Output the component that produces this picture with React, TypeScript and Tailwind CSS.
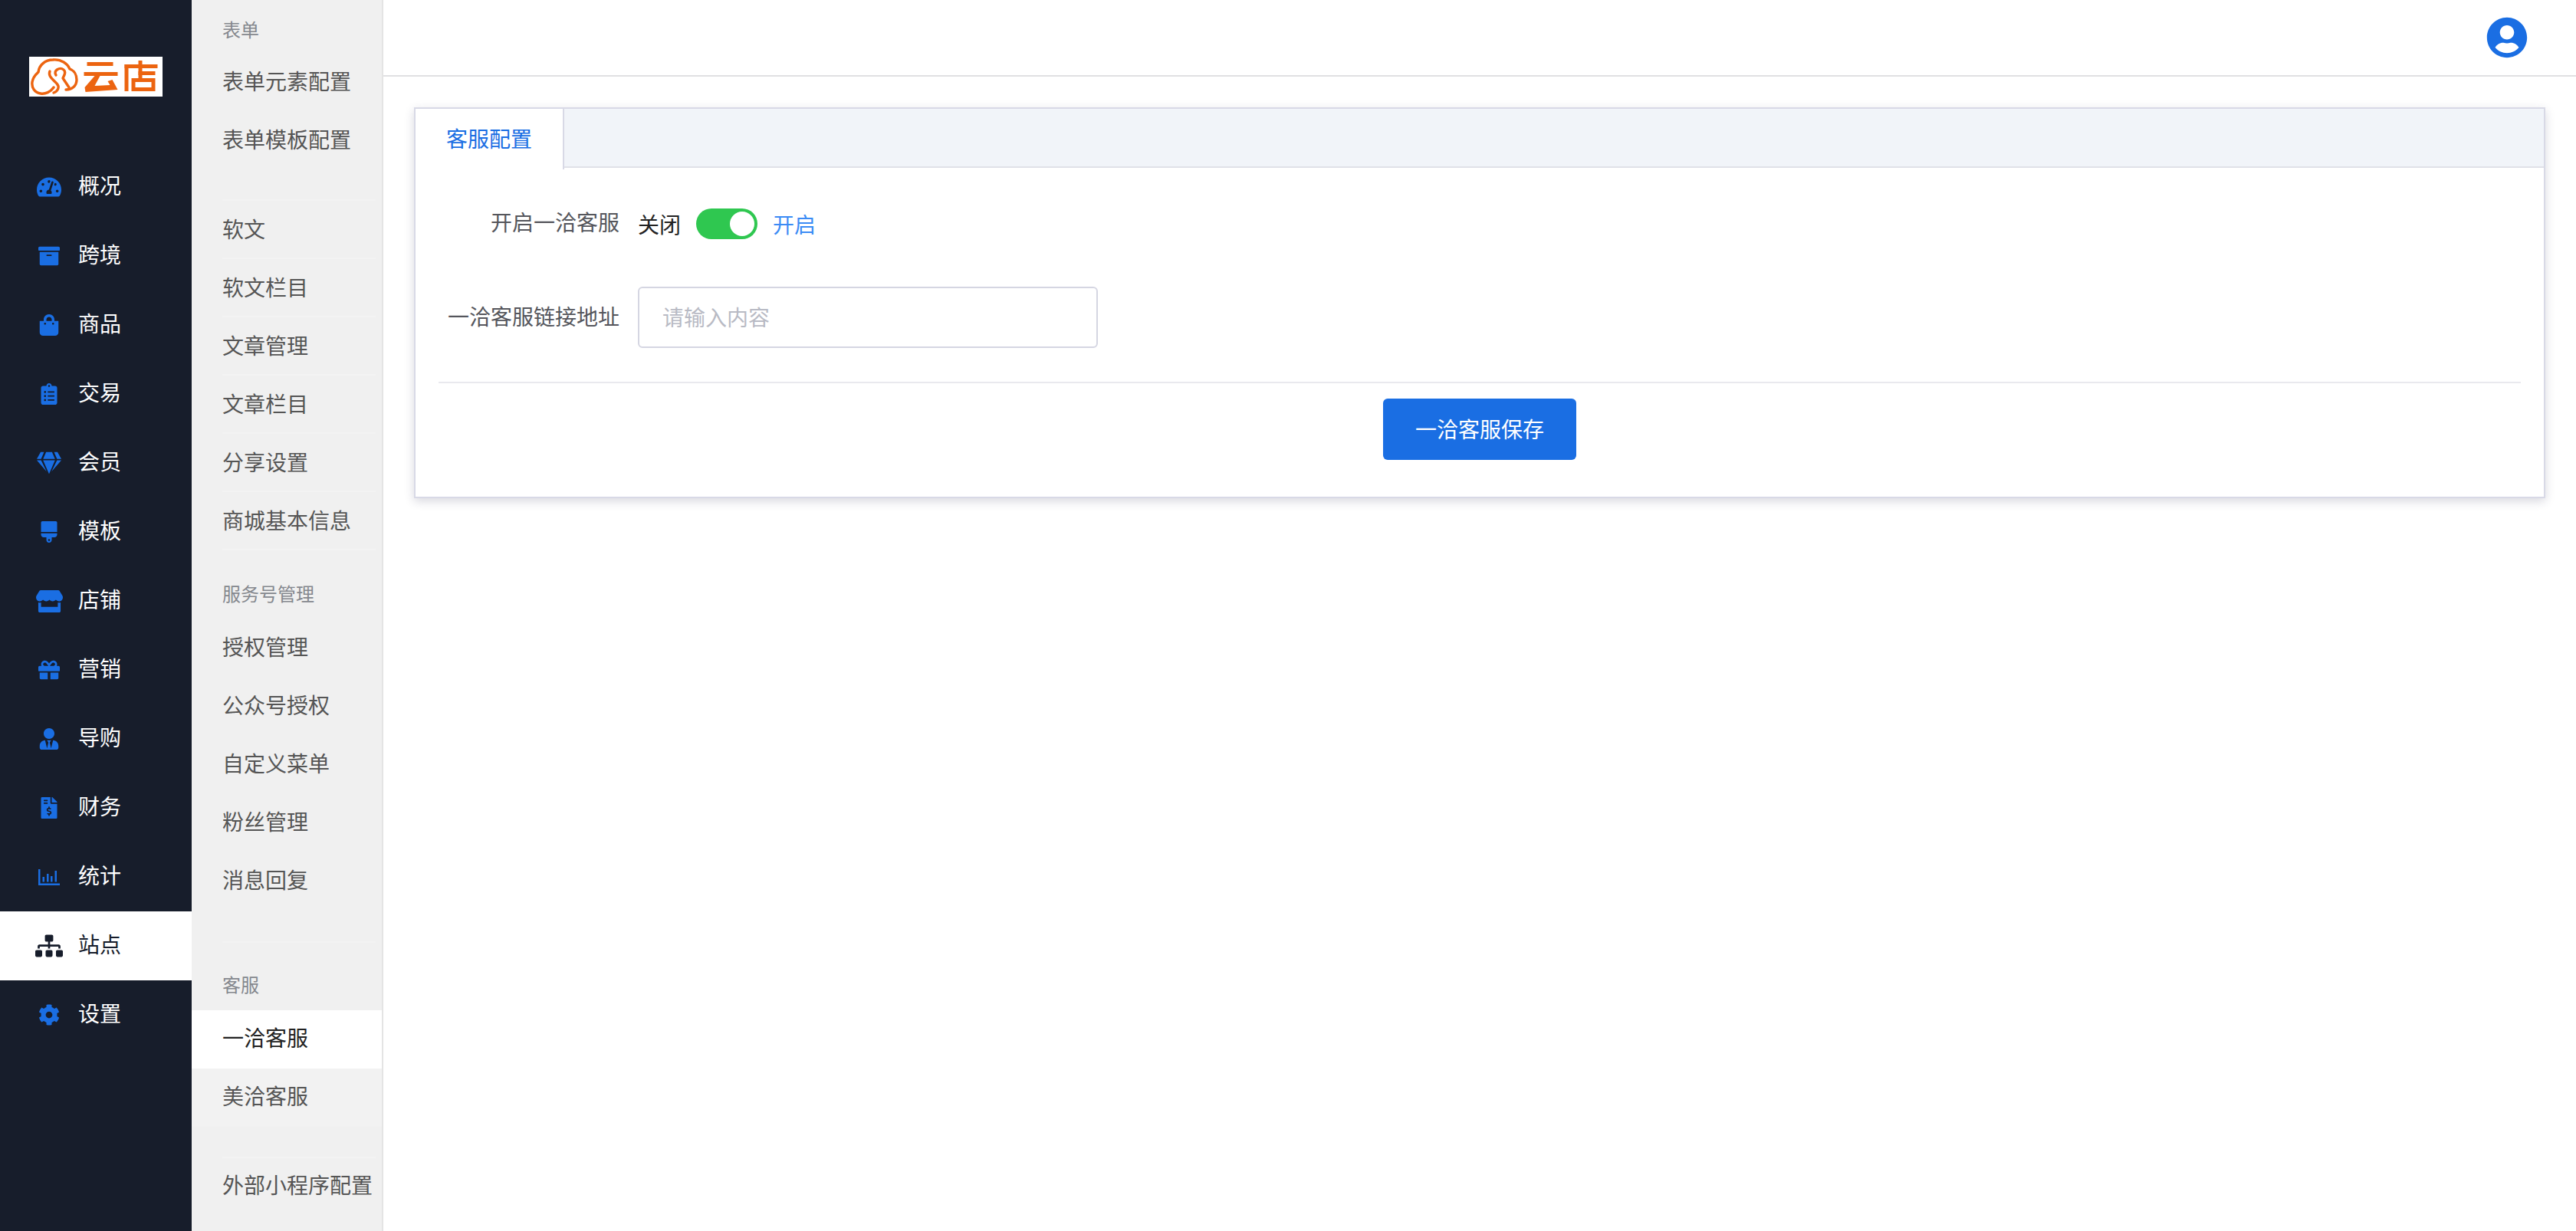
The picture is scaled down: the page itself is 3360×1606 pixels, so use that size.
import React from 'react';
import {
  FaArchive,
  FaBrush,
  FaClipboardList,
  FaCog,
  FaFileInvoiceDollar,
  FaGem,
  FaGift,
  FaShoppingBag,
  FaSitemap,
  FaStore,
  FaTachometerAlt,
  FaUserCircle,
  FaUserTie,
} from 'react-icons/fa';

const CJK = 'font-["Noto_Sans_CJK_SC","Noto_Sans",sans-serif]';

const ChartIcon = () => (
  <svg viewBox="0 0 28 21" className="w-[28px] h-[21px]" fill="#1a6ee3">
    <rect x="0" y="0" width="2.5" height="21" />
    <rect x="0" y="18.5" width="28" height="2.5" />
    <rect x="5.5" y="10" width="2.5" height="6.5" />
    <rect x="11" y="6" width="2.5" height="10.5" />
    <rect x="16" y="9" width="2.5" height="7.5" />
    <rect x="21.5" y="2" width="2.5" height="14.5" />
  </svg>
);

const NAV: { label: string; icon: React.ReactNode; active?: boolean }[] = [
  { label: '概况', icon: <FaTachometerAlt size={32} /> },
  { label: '跨境', icon: <FaArchive size={28} /> },
  { label: '商品', icon: <FaShoppingBag size={28} /> },
  { label: '交易', icon: <FaClipboardList size={28} /> },
  { label: '会员', icon: <FaGem size={32} /> },
  { label: '模板', icon: <FaBrush size={28} /> },
  { label: '店铺', icon: <FaStore size={35} /> },
  { label: '营销', icon: <FaGift size={28} /> },
  { label: '导购', icon: <FaUserTie size={28} /> },
  { label: '财务', icon: <FaFileInvoiceDollar size={28} /> },
  { label: '统计', icon: <ChartIcon /> },
  { label: '站点', icon: <FaSitemap size={36} />, active: true },
  { label: '设置', icon: <FaCog size={28} /> },
];

const SubItem = ({
  label,
  line,
  active,
  tint,
  lift = 'pb-[3px]',
}: {
  label: string;
  line?: boolean;
  active?: boolean;
  tint?: boolean;
  lift?: string;
}) => (
  <div className={`h-[76px] ${active ? 'bg-white' : tint ? 'bg-[#f2f2f2]' : ''}`}>
    <div className={`h-full flex items-center ml-[40px] mr-[8px] ${lift} ${line ? 'border-b-2 border-[#f3f3f3]' : ''}`}>
      <span className={`text-[28px] leading-none ${active ? 'text-[#222222]' : 'text-[#555555]'}`}>{label}</span>
    </div>
  </div>
);

const GroupLabel = ({ label }: { label: string }) => (
  <div className="h-[60px] flex items-center pl-[40px] text-[24px] leading-none text-[#85888e]">{label}</div>
);

export default function App() {
  return (
    <div className={`flex w-[3360px] h-[1606px] overflow-hidden bg-white ${CJK}`}>
      <aside className="w-[250px] shrink-0 bg-[#171d2b] flex flex-col">
        <div className="h-[199px] pt-[74px] flex justify-center">
          <div className="w-[174px] h-[52px] bg-white flex items-center pl-[2px] gap-[7px]">
            <svg viewBox="0 0 62 48" className="w-[62px] h-[48px] shrink-0" fill="none" stroke="#ec6410" strokeWidth="3.4" strokeLinecap="round" strokeLinejoin="round">
              <path d="M30 38C26 44 19 47 13 46C5 45 1 38 2 31C3 24 8 20 10 18C11 9 19 2 29 2C40 1 48 7 51 14C57 16 60 22 60 28C60 36 54 41 46 41" />
              <path d="M25 17C22 24 30 28 34 33C38 37 36 43 30 45" />
              <path d="M33 22C29 16 38 11 43 15C47 18 43 24 42 26L50 38" />
            </svg>
            <svg viewBox="0 0 96 42" className="w-[97px] h-[42px]" fill="#ec6410">
              <rect x="4" y="2" width="34" height="5" />
              <rect x="0" y="15" width="44" height="5" />
              <path d="M14 20h7l-7 13 20-1-3-5 6-2 7 13-42 3-1-6z" />
              <rect x="53" y="5" width="5" height="35" />
              <rect x="53" y="5" width="43" height="5" />
              <rect x="71" y="0" width="5" height="23" />
              <rect x="71" y="14" width="22" height="5" />
              <path d="M62 23h31v17H62zM67 28v7h21v-7z" fillRule="evenodd" />
            </svg>
          </div>
        </div>
        <nav className="flex flex-col">
          {NAV.map((n) => (
            <div key={n.label} className={`h-[90px] flex items-center ${n.active ? 'bg-white text-[#171d2b]' : 'text-white'}`}>
              <span className={`w-[128px] shrink-0 flex justify-center ${n.active ? 'text-[#171d2b]' : 'text-[#1a6ee3]'}`}>
                {n.icon}
              </span>
              <span className="-ml-[26px] pb-[6px] text-[28px] leading-none">{n.label}</span>
            </div>
          ))}
        </nav>
      </aside>

      <aside className="w-[250px] shrink-0 bg-[#f0f0f0] border-r-2 border-[#e4e4e4] flex flex-col overflow-hidden">
        <div className="pt-[8px]">
          <GroupLabel label="表单" />
        </div>
        <SubItem label="表单元素配置" />
        <SubItem label="表单模板配置" />
        <div className="h-[42px] ml-[40px] mr-[8px] border-b-2 border-[#f3f3f3]" />
        <SubItem label="软文" line />
        <SubItem label="软文栏目" line />
        <SubItem label="文章管理" line />
        <SubItem label="文章栏目" line />
        <SubItem label="分享设置" line />
        <SubItem label="商城基本信息" line />
        <div className="pt-[26px] pb-[2px]">
          <GroupLabel label="服务号管理" />
        </div>
        <SubItem label="授权管理" />
        <SubItem label="公众号授权" />
        <SubItem label="自定义菜单" />
        <SubItem label="粉丝管理" />
        <SubItem label="消息回复" />
        <div className="h-[44px] ml-[40px] mr-[8px] border-b-2 border-[#f3f3f3]" />
        <div className="pt-[24px] pb-[4px]">
          <GroupLabel label="客服" />
        </div>
        <SubItem label="一洽客服" active lift="pb-[6px]" />
        <SubItem label="美洽客服" tint lift="pb-[6px]" />
        <div className="h-[41px] ml-[40px] mr-[8px] border-b-2 border-[#f3f3f3]" />
        <SubItem label="外部小程序配置" lift="pb-[8px]" />
      </aside>

      <main className="flex-1 min-w-0 flex flex-col">
        <header className="h-[100px] shrink-0 border-b-2 border-[#e0e0e2] flex items-center justify-end pr-[63px]">
          <FaUserCircle size={54} className="text-[#1a6ee3]" />
        </header>
        <div className="pt-[40px] pl-[40px] pr-[40px]">
          <section className="h-[510px] border-2 border-[#d8d9e6] shadow-[0_4px_12px_rgba(40,40,80,0.18)] bg-white flex flex-col">
            <div className="h-[77px] shrink-0 flex bg-[#f1f4f9]">
              <div className="w-[194px] h-[79px] bg-white border-r-2 border-[#d8d9e6] pl-[40px] pb-[3px] flex items-center text-[28px] leading-none text-[#1a6ee3]">
                客服配置
              </div>
              <div className="flex-1 border-b-2 border-[#e0e1e8]" />
            </div>
            <div className="flex-1 flex flex-col px-[30px]">
              <div className="h-[72px] mt-[37px] flex items-center text-[28px] leading-none">
                <label className="w-[236px] pb-[7px] text-right text-[#55565c]">开启一洽客服</label>
                <span className="ml-[24px] pb-[1px] text-[#222222]">关闭</span>
                <span className="ml-[20px] w-[80px] h-[40px] rounded-full bg-[#2fc750] flex items-center justify-end pr-[4px]">
                  <span className="w-[32px] h-[32px] rounded-full bg-white" />
                </span>
                <span className="ml-[20px] pb-[1px] text-[#3b8bf5]">开启</span>
              </div>
              <div className="h-[80px] mt-[46px] flex items-center text-[28px] leading-none">
                <label className="w-[236px] pb-[4px] text-right text-[#55565c]">一洽客服链接地址</label>
                <input
                  readOnly
                  placeholder="请输入内容"
                  className="ml-[24px] w-[600px] h-[80px] rounded-[6px] border-2 border-[#d5d6e2] px-[30px] pb-[3px] text-[28px] placeholder:text-[#b8bac4] outline-none"
                />
              </div>
              <div className="mt-[44px] border-t-2 border-[#e9e9ee]" />
              <div className="mt-[20px] flex justify-center">
                <button className="w-[252px] h-[80px] rounded-[6px] bg-[#1a6ee3] pb-[3px] text-white text-[28px] leading-none">
                  一洽客服保存
                </button>
              </div>
            </div>
          </section>
        </div>
      </main>
    </div>
  );
}
